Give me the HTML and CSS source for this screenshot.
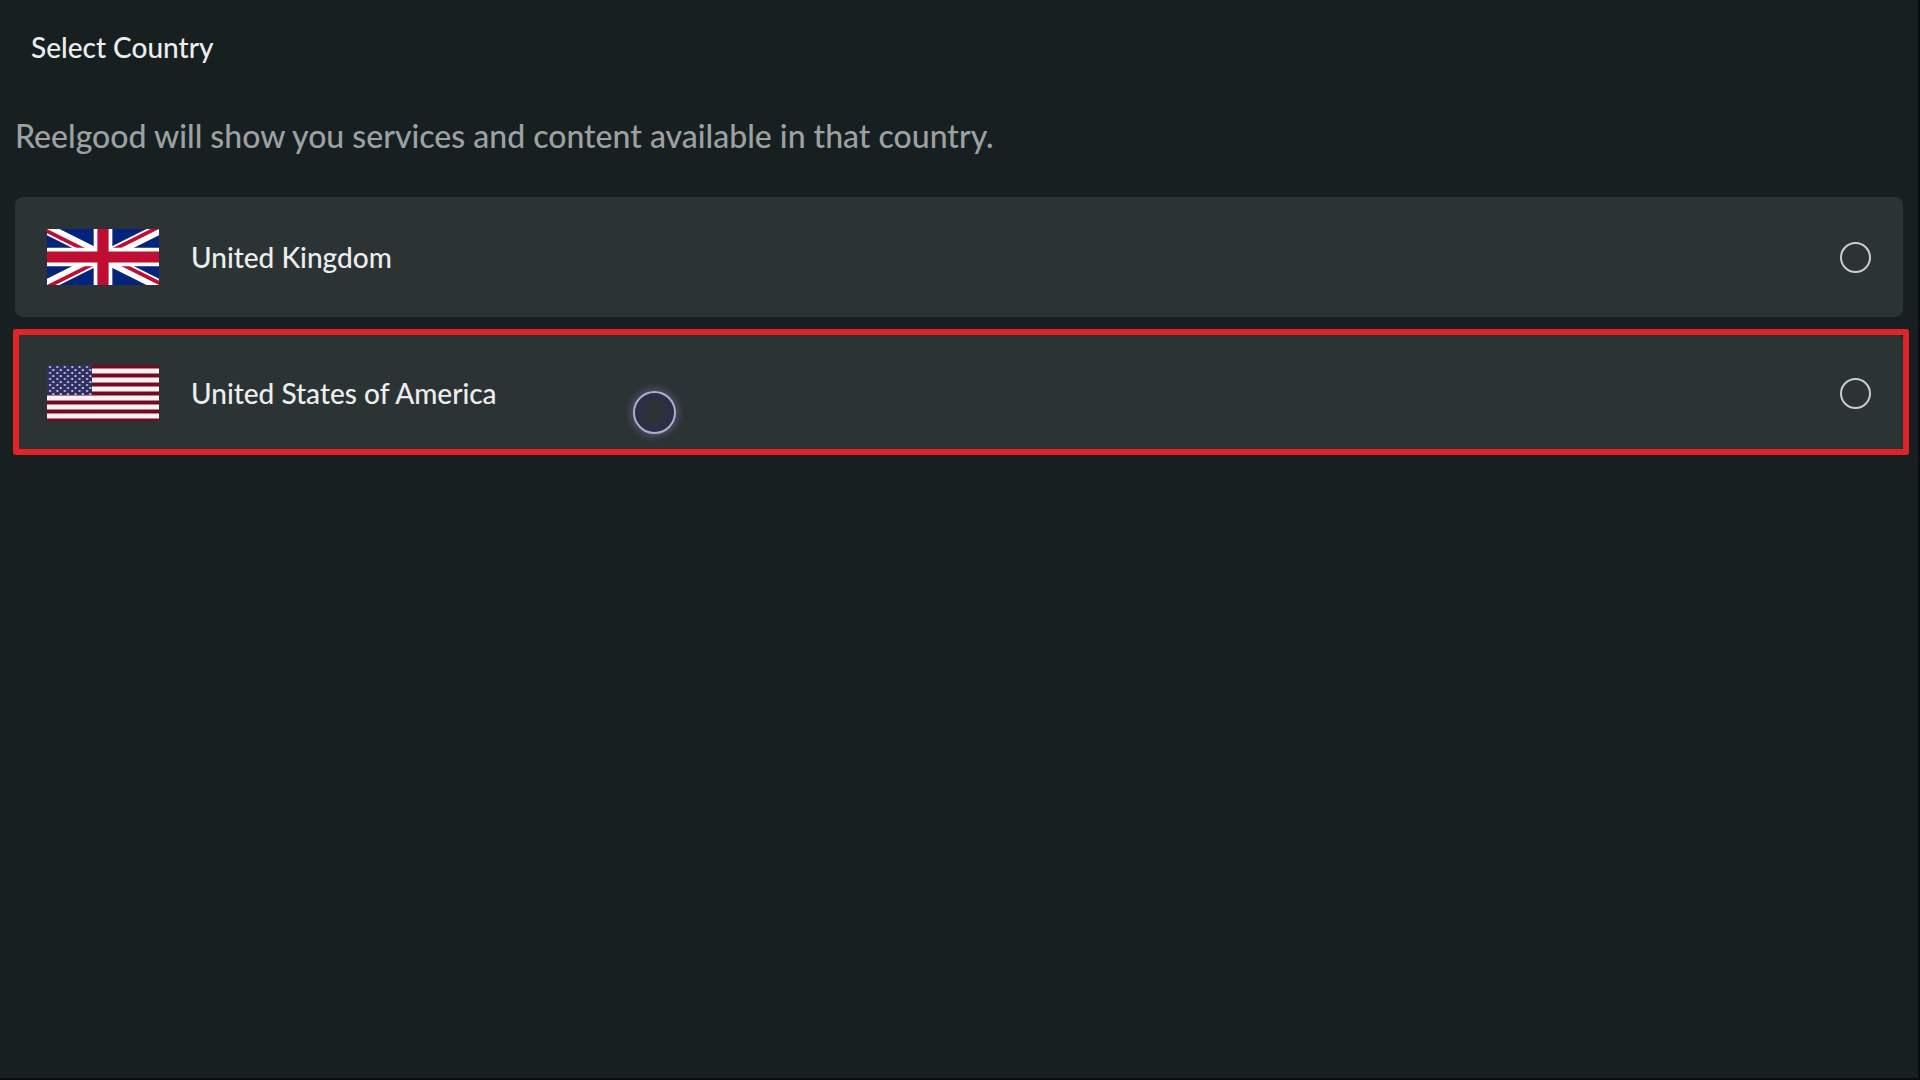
FILE: index.html
```html
<!DOCTYPE html>
<html lang="en">
<head>
    <meta charset="UTF-8">
    <meta name="viewport" content="width=device-width, initial-scale=1.0">
    <title>Select Country</title>
    <link rel="stylesheet" href="styles.css">
</head>
<body>
    <header class="header">
        <h1 class="title">Select Country</h1>
    </header>
    <main class="container">
        <p class="description" id="description">Reelgood will show you services and content available in that country.</p>
        <form class="country-list" aria-describedby="description">
            <label class="country" for="uk">
                <svg class="flag" viewBox="0 0 60 30" aria-hidden="true">
                    <clipPath id="uk-flag"><path d="M0 0h60v30H0z"/></clipPath>
                    <clipPath id="uk-saltire"><path d="M30 15h30v15zv15H0zH0V0zV0h30z"/></clipPath>
                    <g clip-path="url(#uk-flag)">
                        <path d="M0 0h60v30H0z" fill="#04247c"/>
                        <path d="M0 0l60 30M60 0L0 30" stroke="#fff" stroke-width="6"/>
                        <path d="M0 0l60 30M60 0L0 30" clip-path="url(#uk-saltire)" stroke="#c00d33" stroke-width="4"/>
                        <path d="M30 0v30M0 15h60" stroke="#fff" stroke-width="10"/>
                        <path d="M30 0v30M0 15h60" stroke="#c00d33" stroke-width="6"/>
                    </g>
                </svg>
                <span class="country-name">United Kingdom</span>
                <input type="radio" class="country-radio" id="uk" name="country" value="uk">
            </label>
            <label class="country highlight" for="us">
                <svg class="flag" viewBox="0 0 112 56" aria-hidden="true">
                    <defs>
                        <pattern id="us-stars" width="7.4" height="6" patternUnits="userSpaceOnUse">
                            <circle cx="3" cy="2" r="1.1" fill="#d0d0ee"/>
                            <circle cx="6.3" cy="5" r="1.1" fill="#d0d0ee"/>
                        </pattern>
                    </defs>
                    <path d="M0 0h112v56H0z" fill="#6f0c22"/>
                    <path d="M0 6h112M0 15h112M0 24h112M0 33h112M0 42h112M0 51h112" stroke="#fff0f3" stroke-width="5"/>
                    <path d="M0 0h45v30H0z" fill="#2f2f62"/>
                    <path d="M0 0h45v30H0z" fill="url(#us-stars)"/>
                </svg>
                <span class="country-name">United States of America</span>
                <input type="radio" class="country-radio" id="us" name="country" value="us">
            </label>
        </form>
    </main>
    <div class="pointer"></div>
</body>
</html>
```
FILE: styles.css
```css
* {
    box-sizing: border-box;
}

body {
    margin: 0;
    min-height: 100vh;
    font-family: 'Lato', sans-serif;
    font-size: 28px;
    font-weight: 500;
    line-height: 40px;
    color: #eceeee;
    background-color: #181f21;
    border-right: 2px solid #080d0e;
    border-bottom: 2px solid #080d0e;
}

.header {
    padding: 27px 31px;
}

.title {
    margin: 0;
    font-size: 28px;
    font-weight: 500;
}

.container {
    padding: 22px 15px;
}

.description {
    margin: 0 0 41px;
    font-size: 32px;
    color: #9da1a2;
}

.country-list {
    display: flex;
    flex-direction: column;
    gap: 16px;
}

.country {
    display: flex;
    align-items: center;
    gap: 32px;
    height: 120px;
    padding: 0 32px;
    background-color: #2c3335;
    border-radius: 8px;
    position: relative;
    cursor: pointer;
}

.highlight::after {
    content: '';
    position: absolute;
    inset: -4px -6px -2px -2px;
    border: 6px solid #e02329;
    border-radius: 3px;
}

.flag {
    width: 112px;
    height: 56px;
}

.country-name {
    flex: 1;
}

.country-radio {
    appearance: none;
    width: 31px;
    height: 31px;
    margin: 0;
    border: 2px solid #c9cccc;
    border-radius: 50%;
    cursor: pointer;
}

.country-radio:checked {
    background-color: #c9cccc;
}

.pointer {
    position: absolute;
    top: 391px;
    left: 633px;
    width: 43px;
    height: 43px;
    border: 2px solid #b0aecb;
    border-radius: 50%;
    background: radial-gradient(circle, #2c3335 20%, #2b2b4b 75%);
    box-shadow: 0 0 6px 3px rgba(120, 118, 165, 0.4);
    pointer-events: none;
}
```
